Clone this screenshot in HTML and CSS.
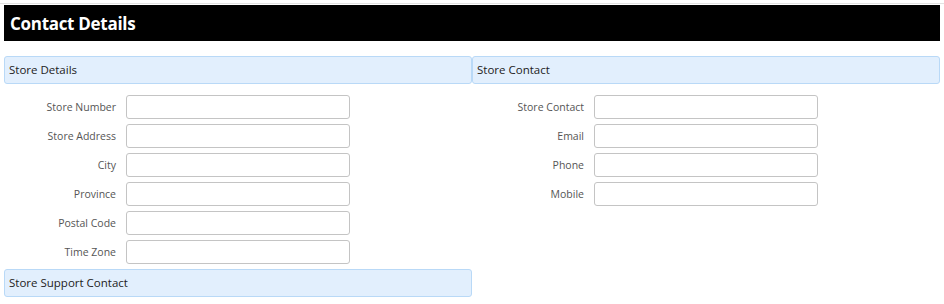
FILE: index.html
```html
<!DOCTYPE html>
<html lang="en">
<head>
    <meta charset="UTF-8">
    <meta name="viewport" content="width=device-width, initial-scale=1.0">
    <title>Contact Details</title>
    <link rel="stylesheet" href="styles.css">
</head>
<body>

    <div class="page">
        <div class="title-bar">
            <h1>Contact Details</h1>
        </div>

        <div class="columns">
            <div class="column">
                <div class="section-header">Store Details</div>
                <div class="fields">
                    <div class="field"><label>Store Number</label><input type="text"></div>
                    <div class="field"><label>Store Address</label><input type="text"></div>
                    <div class="field"><label>City</label><input type="text"></div>
                    <div class="field"><label>Province</label><input type="text"></div>
                    <div class="field"><label>Postal Code</label><input type="text"></div>
                    <div class="field"><label>Time Zone</label><input type="text"></div>
                </div>
                <div class="section-header">Store Support Contact</div>
            </div>

            <div class="column">
                <div class="section-header">Store Contact</div>
                <div class="fields">
                    <div class="field"><label>Store Contact</label><input type="text"></div>
                    <div class="field"><label>Email</label><input type="text"></div>
                    <div class="field"><label>Phone</label><input type="text"></div>
                    <div class="field"><label>Mobile</label><input type="text"></div>
                </div>
            </div>
        </div>
    </div>

</body>
</html>
```

FILE: styles.css
```css
/* Global styles */
body {
    font-family: 'Open Sans', 'Liberation Sans', sans-serif;
    background-color: #fff;
    margin: 0;
    padding: 3px 0 0 0;
}

.page {
    border-top: 1px solid #e2e2e2;
    padding: 1px 4px 0 4px;
}

/* Title bar */
.title-bar {
    background-color: #000;
    height: 36px;
    display: flex;
    align-items: center;
    padding: 0 6px;
}

.title-bar h1 {
    margin: 0;
    color: #fff;
    font-size: 17px;
    font-weight: bold;
    letter-spacing: -0.3px;
}

/* Two column layout */
.columns {
    display: grid;
    grid-template-columns: 468px 468px;
    margin-top: 15px;
}

.section-header {
    height: 26px;
    line-height: 26px;
    padding: 0 4px;
    background-color: #e2effd;
    border: 1px solid #b9d9f7;
    border-radius: 3px;
    font-size: 11.5px;
    color: #222;
}

.fields {
    display: flex;
    flex-direction: column;
    gap: 5px;
    padding: 11px 0 5px 0;
}

.field {
    display: flex;
    align-items: center;
}

.field label {
    width: 112px;
    margin-right: 10px;
    padding-bottom: 1px;
    text-align: right;
    font-size: 10.5px;
    color: #555;
}

.field input {
    width: 224px;
    height: 24px;
    box-sizing: border-box;
    border: 1px solid #c4c4c4;
    border-radius: 3px;
    background-color: #fff;
    margin: 0;
    padding: 0 4px;
}
```
